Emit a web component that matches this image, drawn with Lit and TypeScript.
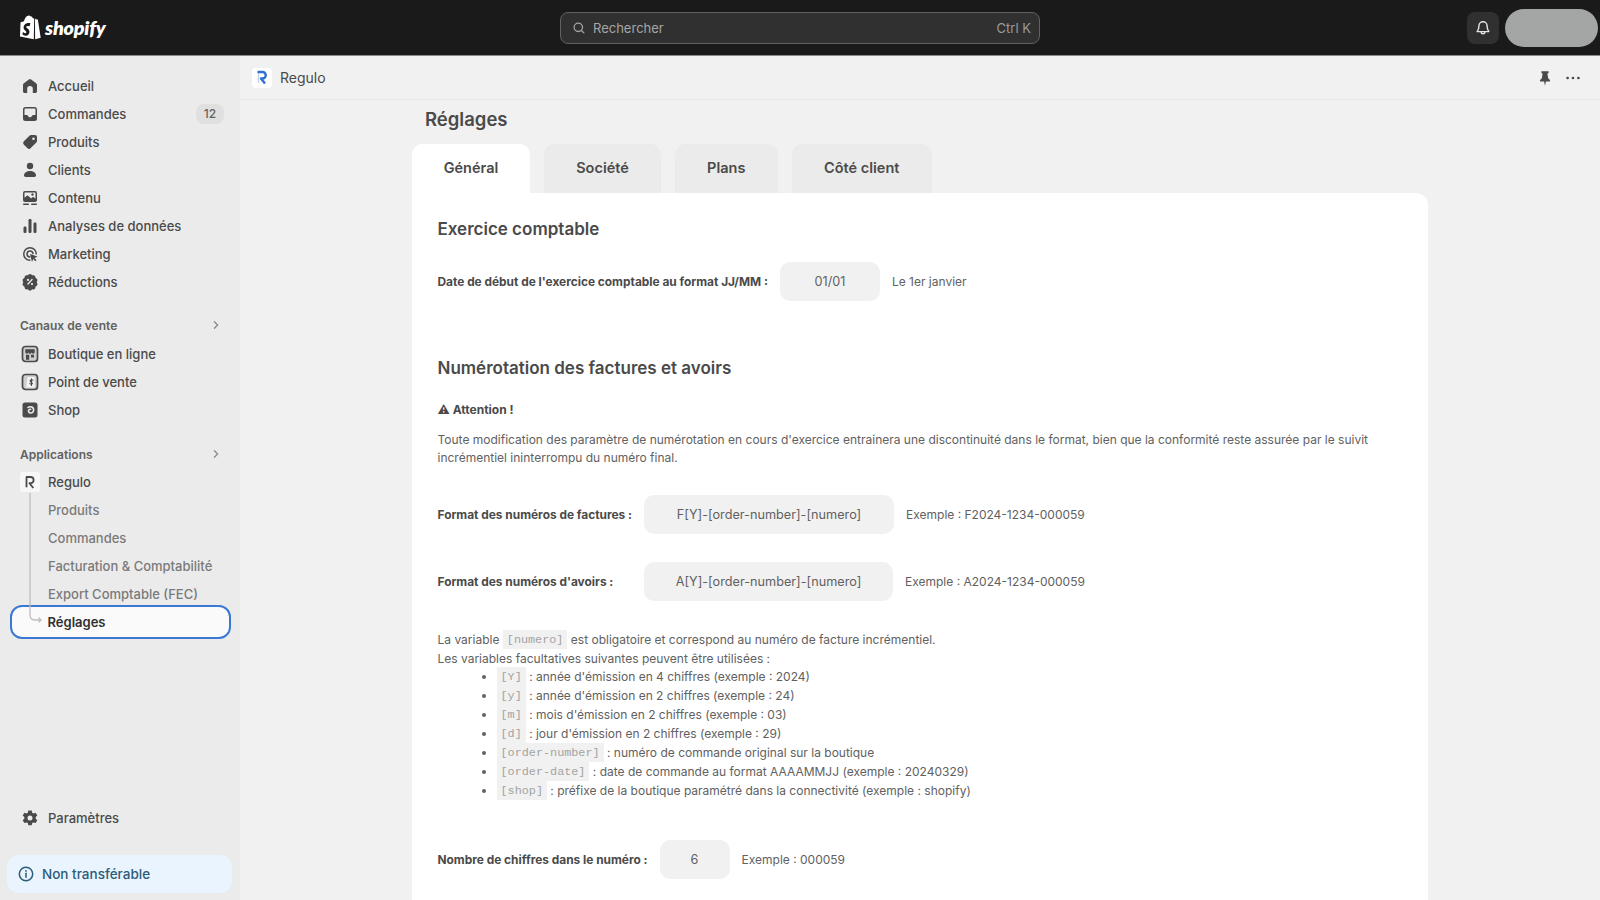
import { LitElement, html, css, svg } from "lit";
import { customElement } from "lit/decorators.js";

const ICONS: Record<string, any> = {
  home: svg`<path d="M8.900 3.400a1.800 1.800 0 0 1 2.200 0l5 3.900c.6.5.9 1.100.9 1.800v6.100c0 1-.8 1.800-1.800 1.800h-2.400v-4.200a2.800 2.800 0 0 0-5.600 0V17H4.800C3.800 17 3 16.200 3 15.200V9.100c0-.7.3-1.300.9-1.800z"/>`,
  orders: svg`<path fill-rule="evenodd" d="M5.500 3h9A2.500 2.500 0 0 1 17 5.500v9a2.500 2.500 0 0 1-2.500 2.500h-9A2.500 2.500 0 0 1 3 14.500v-9A2.500 2.500 0 0 1 5.500 3zm0 1.500a1 1 0 0 0-1 1V11h2.300c.5 0 .9.300 1.100.7.300.9 1.100 1.500 2.100 1.500s1.800-.6 2.100-1.500c.2-.4.600-.7 1.100-.7h2.300V5.500a1 1 0 0 0-1-1z"/>`,
  tag: svg`<path fill-rule="evenodd" d="M11.300 3H15a2 2 0 0 1 2 2v3.700c0 .8-.3 1.500-.9 2.100l-5.300 5.300a2.500 2.500 0 0 1-3.500 0l-3.400-3.400a2.500 2.500 0 0 1 0-3.500l5.300-5.300c.6-.6 1.300-.9 2.100-.9zM13.500 8a1.300 1.300 0 1 0 0-2.600 1.300 1.300 0 0 0 0 2.600z"/>`,
  person: svg`<circle cx="10" cy="6" r="3.200"/><path d="M4 15.300C4 12.900 6.700 11 10 11s6 1.900 6 4.300c0 .9-.7 1.700-1.600 1.700H5.600c-.9 0-1.600-.8-1.600-1.700z"/>`,
  content: svg`<path fill-rule="evenodd" d="M5 3h10a2 2 0 0 1 2 2v7a2 2 0 0 1-2 2H5a2 2 0 0 1-2-2V5a2 2 0 0 1 2-2zm0 1.500a.5.5 0 0 0-.5.5v4.800l2.300-2a1 1 0 0 1 1.300 0l3 2.700 1.400-1.200a1 1 0 0 1 1.300 0l1.700 1.400V5a.5.5 0 0 0-.5-.5zm7.500 3.200a1.200 1.200 0 1 0 0-2.400 1.200 1.200 0 0 0 0 2.400z"/><rect x="3" y="15.500" width="6" height="1.500" rx=".7"/><rect x="11" y="15.500" width="6" height="1.500" rx=".7"/>`,
  chart: svg`<rect x="3.500" y="10.500" width="3" height="6.500" rx="1.200"/><rect x="8.500" y="3" width="3" height="14" rx="1.200"/><rect x="13.500" y="6.500" width="3" height="10.500" rx="1.200"/>`,
  target: svg`<path d="M10 3a7 7 0 0 1 7 7 .8.8 0 0 1-1.500 0A5.500 5.500 0 1 0 10 15.500a.8.8 0 0 1 0 1.500 7 7 0 1 1 0-14z"/><path d="M10 6.300a3.700 3.700 0 0 1 3.700 3.500.8.8 0 0 1-1.500 0A2.200 2.200 0 1 0 10 12.200a.8.8 0 0 1 0 1.500 3.700 3.700 0 0 1 0-7.400z"/><path d="M10 10l7.500 2.500-3 1.400 2 2.300-1.200 1.100-2.100-2.300-1.200 3z"/>`,
  discount: svg`<path fill-rule="evenodd" d="M8.600 2.600a2 2 0 0 1 2.800 0l.8.700 1.100-.1a2 2 0 0 1 2.100 1.700l.2 1.100.9.600a2 2 0 0 1 .7 2.700l-.5 1 .5 1a2 2 0 0 1-.7 2.700l-.9.600-.2 1.100a2 2 0 0 1-2.100 1.700l-1.100-.1-.8.700a2 2 0 0 1-2.800 0l-.8-.7-1.100.1a2 2 0 0 1-2.100-1.700l-.2-1.100-.9-.6a2 2 0 0 1-.7-2.700l.5-1-.5-1a2 2 0 0 1 .7-2.700l.9-.6.2-1.100a2 2 0 0 1 2.100-1.700l1.100.1zM12.500 7a.7.700 0 0 0-1 0l-4 4.500a.7.700 0 1 0 1 1l4-4.500a.7.700 0 0 0 0-1zM8 9a1.100 1.100 0 1 0 0-2.200A1.100 1.100 0 0 0 8 9zm4 4.200a1.100 1.100 0 1 0 0-2.200 1.100 1.100 0 0 0 0 2.200z"/>`,
  store: svg`<rect x="2.500" y="2.500" width="15" height="15" rx="3" fill="#cfcfcf" stroke="currentColor" stroke-width="1.700"/><path d="M5.300 5.300h9.400v2.900a1.570 1.570 0 0 1-3.130 0 1.570 1.570 0 0 1-3.140 0 1.570 1.570 0 0 1-3.130 0z"/><path d="M6 10.800h3.200v5H6zM11 10.800h3v2.800h-3z"/>`,
  pos: svg`<rect x="2.500" y="2.500" width="15" height="15" rx="3" fill="#cfcfcf" stroke="currentColor" stroke-width="1.700"/><path d="M7.500 5h7.200v10.500H6.300z" fill="#f4f4f4"/><path d="M13 8.200c-.4-.3-.9-.4-1.400-.4-1 0-1.500.5-1.500 1.200 0 1.300 2.300 1.100 2.300 2.300 0 .5-.5.800-1.200.8-.5 0-1-.2-1.400-.5M11.500 6.700v6.800" fill="none" stroke="currentColor" stroke-width="1.100" stroke-linecap="round"/>`,
  shop: svg`<path fill-rule="evenodd" d="M5 2.500h10A2.500 2.500 0 0 1 17.500 5v10a2.500 2.500 0 0 1-2.500 2.500H5A2.500 2.500 0 0 1 2.500 15V5A2.500 2.500 0 0 1 5 2.500zM10.500 6c-1.200 0-2.400.400-3.500 1.200l.8 1.300c.8-.6 1.700-.9 2.600-.9 1.500 0 2.400 1 2.400 2.300s-.9 2.300-2.100 2.300c-.8 0-1.400-.5-1.400-1.200s.5-1.100 1.100-1.100c.3 0 .5.100.7.200l.5-1.200a3 3 0 0 0-1.300-.3c-1.500 0-2.600 1-2.600 2.500s1.200 2.700 2.900 2.700c2.200 0 3.800-1.700 3.800-3.900S13 6 10.500 6z"/>`,
  gear: svg`<path fill-rule="evenodd" d="M8.300 2.500h3.400l.5 2.200 1.300.7 2.100-.7 1.700 2.900-1.600 1.500v1.600l1.600 1.500-1.700 2.900-2.100-.7-1.300.7-.5 2.200H8.300l-.5-2.200-1.300-.7-2.100.7-1.700-2.900 1.600-1.500V9.100L2.700 7.600l1.700-2.900 2.100.7 1.300-.7zM10 12.500a2.500 2.500 0 1 0 0-5 2.500 2.500 0 0 0 0 5z"/>`,
};

const icon = (n: string) => html`<svg class="ico" viewBox="0 0 20 20" fill="currentColor">${ICONS[n]}</svg>`;
const chevron = html`<svg class="chev" viewBox="0 0 20 20" fill="none" stroke="currentColor" stroke-width="1.600" stroke-linecap="round" stroke-linejoin="round"><path d="M8 6l4 4-4 4"/></svg>`;

@customElement("app-root")
export class AppRoot extends LitElement {
  static styles = css`
    :host { display: block; height: 900px; overflow: hidden; font-family: Inter, "Noto Sans", sans-serif; background: #f1f1f1; color: #303030; }
    * { box-sizing: border-box; }
    .top { height: 56px; background: #1a1a1a; border-bottom: 1px solid #8a8a8a; display: flex; align-items: center; padding-left: 20px; position: relative; }
    .logo { display: flex; align-items: center; gap: 4px; width: 540px; flex: none; }
    .bag { width: 21px; height: 25px; margin-top: -1px; }
    .word { color: #fff; font: italic 800 19.700px Lato, sans-serif; letter-spacing: -0.2px; }
    .search { width: 480px; height: 32px; flex: none; background: #303030; border: 1px solid #616161; border-radius: 8px; display: flex; align-items: center; padding: 0 8px 0 11px; color: #a6a6a6; font-size: 13px; }
    .search svg { width: 14px; height: 14px; margin-right: 7px; }
    .search .ph { flex: 1; }
    .search .kbd { color: #9a9a9a; }
    .right { margin-left: auto; display: flex; align-items: center; gap: 6px; padding-right: 2px; }
    .bell { width: 32px; height: 32px; border-radius: 8px; background: #303030; display: flex; align-items: center; justify-content: center; color: #e3e3e3; }
    .bell svg { width: 18px; height: 18px; }
    .avatar { width: 93px; height: 38px; border-radius: 19px; background: #a4a6a5; }

    .body { display: flex; height: 844px; }
    .side { width: 240px; flex: none; background: #ebebeb; display: flex; flex-direction: column; padding: 16px 8px 7px 0; }
    .row { height: 28px; display: flex; align-items: center; font-size: 13px; font-weight: 500; color: #4a4a4a; padding-left: 20px; flex: none; position: relative; }
    .ico { width: 20px; height: 20px; flex: none; color: #4a4a4a; margin-right: 8px; }
    .row .badge { position: absolute; left: 196px; top: 4px; width: 28px; height: 20px; border-radius: 8px; background: #e0e0e0; color: #616161; font-size: 12px; text-align: center; line-height: 20px; }
    .sec { height: 28px; margin-top: 15px; display: flex; align-items: center; justify-content: space-between; padding: 0 8px 0 20px; font-size: 12px; font-weight: 600; color: #616161; flex: none; }
    .sec + .row { margin-top: 1px; }
    .sec.apps { margin-top: 16px; }
    .sec.apps + .row { margin-top: 0; }
    .chev { width: 16px; height: 16px; color: #8a8a8a; }
    .group { position: relative; }
    .mini { width: 20px; height: 20px; border-radius: 3px; background: #f7f7f7; margin-right: 8px; display: flex; align-items: center; justify-content: center; flex: none; color: #4a4a4a; }
    .mini svg { width: 12px; height: 14px; }
    .sub { padding-left: 48px; color: #7a7a7a; font-weight: 500; }
    .active { padding-left: 36px; margin: -3px 0 -3px 9.500px; height: 34px; width: 221px; background: #fafafa; border: 2px solid #3b78d4; border-radius: 12px; color: #303030; font-weight: 600; position: relative; }
    .tree { position: absolute; left: 29px; top: 25px; width: 14px; height: 130px; color: #bdbdbd; }
    .spacer { flex: 1; }
    .params { margin-bottom: 23px; }
    .notice { margin-left: 7px; width: 225px; height: 38px; border-radius: 12px; background: #eaf4ff; color: #2b5c78; font-size: 13.500px; font-weight: 500; display: flex; align-items: center; padding-left: 11px; flex: none; }
    .notice svg { width: 16px; height: 16px; margin-right: 8px; }

    .main { flex: 1; min-width: 0; overflow: hidden; }
    .sub-head { height: 44px; border-bottom: 1px solid #e6e6e6; display: flex; align-items: center; padding: 0 18px 0 12px; font-size: 14px; color: #4a4a4a; }
    .app-ic { width: 20px; height: 20px; border-radius: 4px; background: #fff; margin-right: 8px; display: flex; align-items: center; justify-content: center; }
    .app-ic svg { width: 12px; height: 15px; }
    .sub-head .name { flex: 1; }
    .sub-head svg.act { width: 18px; height: 18px; color: #4a4a4a; }
    .pin { margin-right: 10px; }
    .wrap { margin-left: 172px; width: 1016px; }
    h1 { margin: 0; padding: 7px 0 0 13px; height: 44px; font-size: 18.500px; line-height: 24px; font-weight: 600; color: #4a4a4a; }
    .tabs { display: flex; gap: 14px; height: 49px; }
    .tab { background: #ebebeb; border-radius: 10px 10px 0 0; display: flex; align-items: center; justify-content: center; font-size: 14.500px; font-weight: 600; color: #4a4a4a; padding-bottom: 2px; }
    .tab.on { background: #fff; }
    .t1 { width: 118px; } .t2 { width: 117px; } .t3 { width: 102.500px; } .t4 { width: 140.500px; }
    .card { background: #fff; border-radius: 0 12px 0 0; padding: 24px 25px 40px 25.500px; height: 800px; font-size: 12px; color: #616161; }
    h2 { margin: 0; font-size: 17px; line-height: 24px; font-weight: 600; color: #4a4a4a; }
    h2.second { margin-top: 55px; }
    .form { display: flex; align-items: center; gap: 12px; height: 39px; margin-top: 28px; }
    .form.first { margin-top: 21px; }
    .form.after { margin-top: 27px; }
    .form.last { margin-top: 40px; }
    .lab { font-size: 11.900px; font-weight: 700; color: #4a4a4a; white-space: nowrap; }
    .lab.wide { width: 194.500px; }
    .inp { height: 39px; background: #f1f1f1; border-radius: 10px; display: flex; align-items: center; justify-content: center; font-size: 12.700px; color: #616161; flex: none; }
    .w100 { width: 100px; } .w250 { width: 250px; } .w249 { width: 249px; } .w70 { width: 70px; }
    .att { margin: 20px 0 0; font-size: 12px; line-height: 19px; font-weight: 700; color: #4a4a4a; }
    .para { margin: 12px 0 0; line-height: 18.400px; }
    .vars { margin: 29px 0 0; line-height: 19px; }
    code { display: inline-block; height: 19px; vertical-align: top; background: #f1f1f1; color: #a3a3a3; font: 11.800px/20px "Liberation Mono", monospace; padding: 0 4px; }
    ul { margin: -1px 0 0; padding: 0 0 0 59px; line-height: 19px; }
    li { height: 19px; white-space: nowrap; }
  `;

  render() {
    const nav = [
      ["home", "Accueil"], ["orders", "Commandes"], ["tag", "Produits"], ["person", "Clients"],
      ["content", "Contenu"], ["chart", "Analyses de données"], ["target", "Marketing"], ["discount", "Réductions"],
    ];
    const list: [string, string][] = [
      ["[Y]", ": année d'émission en 4 chiffres (exemple : 2024)"],
      ["[y]", ": année d'émission en 2 chiffres (exemple : 24)"],
      ["[m]", ": mois d'émission en 2 chiffres (exemple : 03)"],
      ["[d]", ": jour d'émission en 2 chiffres (exemple : 29)"],
      ["[order-number]", ": numéro de commande original sur la boutique"],
      ["[order-date]", ": date de commande au format AAAAMMJJ (exemple : 20240329)"],
      ["[shop]", ": préfixe de la boutique paramétré dans la connectivité (exemple : shopify)"],
    ];
    return html`
      <header class="top">
        <div class="logo">
          <svg class="bag" viewBox="0 0 21 25"><path fill="#fff" d="M14.200 3.200 13 3.500c-.4-1.200-1.100-2.300-2.400-2.300h-.2C10 .700 9.500.4 9 .4 5.900.4 4.400 4.300 4 6.300l-2.600.8c-.8.300-.8.300-.9 1L0 21.600 13.800 24.200 14.200 3.200z"/><path fill="#fff" d="M15 3.200 15.100 24.200 20.800 22.800c0 0-2.900-17.900-2.900-18-.1-.2-.2-.3-.4-.3l-1.900-.2z"/><path fill="#1a1a1a" d="M10.300 8.800 9.500 11.300s-.8-.4-1.800-.4c-1.500 0-1.500.9-1.500 1.100 0 1.300 3.300 1.800 3.300 4.800 0 2.400-1.500 3.900-3.500 3.900-2.400 0-3.600-1.500-3.600-1.500l.6-2.100s1.300 1.100 2.300 1.100c.7 0 1-.6 1-1 0-1.700-2.700-1.800-2.700-4.600 0-2.300 1.700-4.600 5-4.600 1.300 0 2.700.8 2.700.8z"/></svg>
          <span class="word">shopify</span>
        </div>
        <div class="search">
          <svg viewBox="0 0 20 20" fill="none" stroke="currentColor" stroke-width="1.800" stroke-linecap="round"><circle cx="9" cy="9" r="6"/><path d="M13.500 13.500 17 17"/></svg>
          <span class="ph">Rechercher</span><span class="kbd">Ctrl K</span>
        </div>
        <div class="right">
          <div class="bell"><svg viewBox="0 0 20 20" fill="none" stroke="currentColor" stroke-width="1.600" stroke-linejoin="round" stroke-linecap="round"><path d="M10 3a4.500 4.500 0 0 0-4.500 4.500c0 3-.7 4.500-2 6.500h13c-1.300-2-2-3.500-2-6.500A4.500 4.500 0 0 0 10 3z"/><path d="M8 14.500a2 2 0 0 0 4 0"/></svg></div>
          <div class="avatar"></div>
        </div>
      </header>
      <div class="body">
        <nav class="side">
          ${nav.map(([i, t]) => html`<div class="row">${icon(i)}${t}${t === "Commandes" ? html`<span class="badge">12</span>` : ""}</div>`)}
          <div class="sec"><span>Canaux de vente</span>${chevron}</div>
          <div class="row">${icon("store")}Boutique en ligne</div>
          <div class="row">${icon("pos")}Point de vente</div>
          <div class="row">${icon("shop")}Shop</div>
          <div class="sec apps"><span>Applications</span>${chevron}</div>
          <div class="group">
            <div class="row"><span class="mini"><svg viewBox="0 0 12 14" fill="none" stroke="currentColor" stroke-width="1.800"><path d="M2.500 1.800v10.500"/><path d="M2 2h4.500a3 3 0 0 1 0 6.200H5.500l3.800 4.800" stroke-linejoin="round"/></svg></span>Regulo</div>
            <div class="row sub">Produits</div>
            <div class="row sub">Commandes</div>
            <div class="row sub">Facturation &amp; Comptabilité</div>
            <div class="row sub">Export Comptable (FEC)</div>
            <div class="row active">Réglages</div>
            <svg class="tree" viewBox="0 0 14 130" fill="none" stroke="currentColor" stroke-width="1.300"><path d="M1 0v122q0 5 5 5h6"/><path d="M9.500 124.500 12 127l-2.500 2.500"/></svg>
          </div>
          <div class="spacer"></div>
          <div class="row params">${icon("gear")}Paramètres</div>
          <div class="notice"><svg viewBox="0 0 16 16" fill="none" stroke="currentColor" stroke-width="1.500"><circle cx="8" cy="8" r="6.700"/><path d="M8 7.200v4" stroke-linecap="round"/><circle cx="8" cy="4.900" r=".9" fill="currentColor" stroke="none"/></svg>Non transférable</div>
        </nav>
        <main class="main">
          <div class="sub-head">
            <span class="app-ic"><svg viewBox="0 0 12 15" fill="none"><path d="M2.500 2v11" stroke="#c4d3ea" stroke-width="1.500"/><path d="M1.500 2h5a3.200 3.200 0 0 1 0 6.500H5l4 5" stroke="#2f6fd6" stroke-width="2.400" stroke-linejoin="round"/></svg></span>
            <span class="name">Regulo</span>
            <svg class="act pin" viewBox="0 0 20 20" fill="currentColor"><path d="M6 2.500h8v1.700l-1.300 1 .8 5 2 2v1.800h-4.500L10 18.500 9 14H4.500v-1.800l2-2 .8-5L6 4.200z"/></svg>
            <svg class="act" viewBox="0 0 20 20" fill="currentColor"><circle cx="4" cy="10" r="1.500"/><circle cx="10" cy="10" r="1.500"/><circle cx="16" cy="10" r="1.500"/></svg>
          </div>
          <div class="wrap">
            <h1>Réglages</h1>
            <div class="tabs">
              <div class="tab on t1">Général</div>
              <div class="tab t2">Société</div>
              <div class="tab t3">Plans</div>
              <div class="tab t4">Côté client</div>
            </div>
            <section class="card">
              <h2>Exercice comptable</h2>
              <div class="form first">
                <span class="lab">Date de début de l'exercice comptable au format JJ/MM :</span>
                <span class="inp w100">01/01</span><span>Le 1er janvier</span>
              </div>
              <h2 class="second">Numérotation des factures et avoirs</h2>
              <p class="att">⚠ Attention !</p>
              <p class="para">Toute modification des paramètre de numérotation en cours d'exercice entrainera une discontinuité dans le format, bien que la conformité reste assurée par le suivit incrémentiel ininterrompu du numéro final.</p>
              <div class="form after">
                <span class="lab">Format des numéros de factures :</span>
                <span class="inp w250">F[Y]-[order-number]-[numero]</span><span>Exemple : F2024-1234-000059</span>
              </div>
              <div class="form">
                <span class="lab wide">Format des numéros d'avoirs :</span>
                <span class="inp w249">A[Y]-[order-number]-[numero]</span><span>Exemple : A2024-1234-000059</span>
              </div>
              <div class="vars">
                <div>La variable <code>[numero]</code> est obligatoire et correspond au numéro de facture incrémentiel.</div>
                <div>Les variables facultatives suivantes peuvent être utilisées :</div>
                <ul>${list.map(([c, t]) => html`<li><code>${c}</code> ${t}</li>`)}</ul>
              </div>
              <div class="form last">
                <span class="lab">Nombre de chiffres dans le numéro :</span>
                <span class="inp w70">6</span><span>Exemple : 000059</span>
              </div>
            </section>
          </div>
        </main>
      </div>
    `;
  }
}
